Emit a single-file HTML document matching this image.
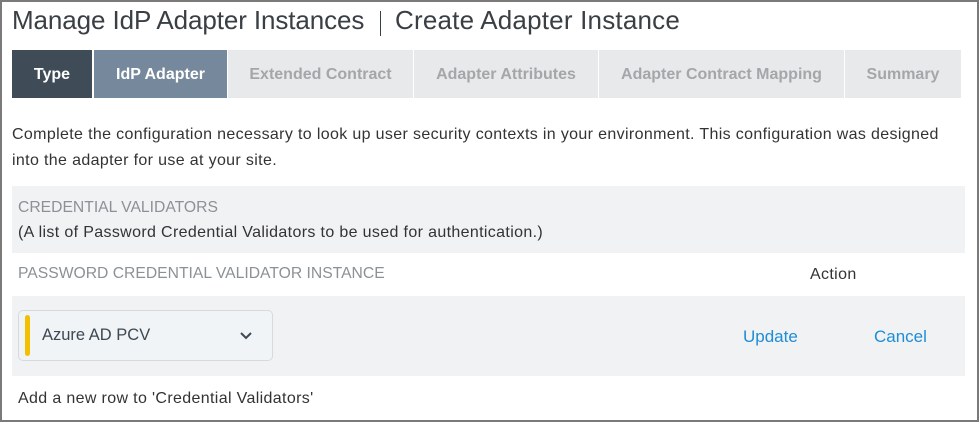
<!DOCTYPE html>
<html><head><meta charset="utf-8"><style>
*{margin:0;padding:0;box-sizing:border-box}
html,body{width:979px;height:422px;overflow:hidden;background:#fff}
body{font-family:"Liberation Sans",sans-serif;color:#333;position:relative}
.frame{position:absolute;left:0;top:0;width:979px;height:422px;border:2px solid #7a7a7a}
.abs{position:absolute;white-space:nowrap}
.title{left:12px;top:5px;font-size:26px;color:#3a3f44;letter-spacing:-0.1px}
.sep{left:380px;top:11px;width:1px;height:25px;background:#3a3f44}
.tab{position:absolute;top:50px;height:48px;line-height:50px;text-align:center;font-size:16px;font-weight:bold;color:#a4a7aa;background:#e8e9ea}
.body{font-size:16px;color:#333;letter-spacing:0.35px}
.gray{position:absolute;left:12px;width:953px;background:#f1f2f4}
.lbl{font-size:15.7px;color:#8c9196}
</style></head><body>
<div class="abs title">Manage IdP Adapter Instances</div>
<div class="abs sep"></div>
<div class="abs title" style="left:395px;letter-spacing:0.2px">Create Adapter Instance</div>

<div class="tab" style="left:12px;width:80px;background:#3f4b56;color:#fff">Type</div>
<div class="tab" style="left:94px;width:133px;background:#76899c;color:#fff">IdP Adapter</div>
<div class="tab" style="left:228px;width:185px">Extended Contract</div>
<div class="tab" style="left:414px;width:184px">Adapter Attributes</div>
<div class="tab" style="left:599px;width:245px">Adapter Contract Mapping</div>
<div class="tab" style="left:845px;width:116px">Summary</div>

<div class="abs body" style="left:12px;top:126px">Complete the configuration necessary to look up user security contexts in your environment. This configuration was designed</div>
<div class="abs body" style="left:12px;top:152px">into the adapter for use at your site.</div>

<div class="gray" style="top:186px;height:67px"></div>
<div class="abs lbl" style="left:18px;top:199px">CREDENTIAL VALIDATORS</div>
<div class="abs body" style="left:18px;top:224px">(A list of Password Credential Validators to be used for authentication.)</div>

<div class="abs lbl" style="left:18px;top:265px">PASSWORD CREDENTIAL VALIDATOR INSTANCE</div>
<div class="abs body" style="left:810px;top:266px">Action</div>

<div class="gray" style="top:296px;height:80px"></div>
<div class="abs" style="left:18px;top:310px;width:255px;height:51px;border:1px solid #d6dadd;border-radius:5px;background:#f0f4f7"></div>
<div class="abs" style="left:25px;top:315px;width:5px;height:41px;border-radius:3px;background:#f2c000"></div>
<div class="abs" style="left:42px;top:326px;font-size:16.5px;color:#3d4853">Azure AD PCV</div>
<svg class="abs" style="left:239px;top:331px" width="14" height="10" viewBox="0 0 14 10"><path d="M2 2 L7 7 L12 2" fill="none" stroke="#3d4853" stroke-width="2"/></svg>
<div class="abs" style="left:743px;top:327px;font-size:17px;color:#1f8dd6">Update</div>
<div class="abs" style="left:874px;top:327px;font-size:17px;color:#1f8dd6">Cancel</div>

<div class="abs body" style="left:18px;top:390px">Add a new row to 'Credential Validators'</div>
<div class="frame"></div>
</body></html>
